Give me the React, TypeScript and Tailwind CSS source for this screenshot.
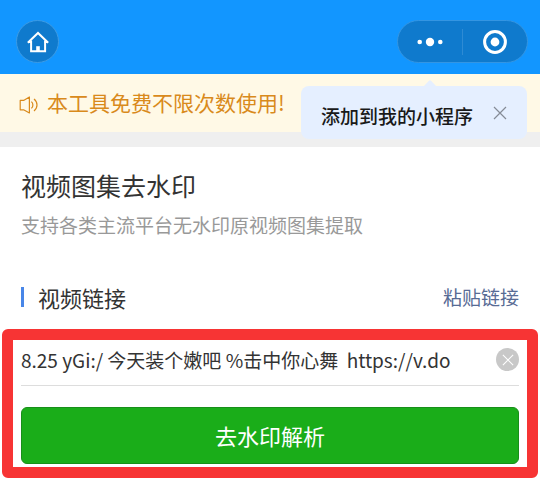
import { useState } from "react";

function HomeIcon() {
  return (
    <svg viewBox="0 0 24 24" className="w-6 h-6" fill="none" stroke="currentColor" strokeWidth="2">
      <path d="M1.8 12.8 12 3l10.2 9.8" />
      <path d="M5.1 10.5v10.8h14V10.5" />
      <path d="M10.2 21v-4.8h3.6V21z" fill="currentColor" stroke="none" />
      <path d="M2 11.9h3.6M18.6 11.9H22" />
    </svg>
  );
}

function SpeakerIcon() {
  return (
    <svg viewBox="0 0 20 20" className="w-5 h-5 shrink-0" fill="none" stroke="currentColor" strokeWidth="1.2">
      <path d="M1.2 5.4h3.4L10.4 2v16l-5.8-3.2H1.2z" strokeLinejoin="round" />
      <path d="M12.4 6.6c2 1.8 2 5 0 6.8" />
      <path d="M15 4c4 3.2 4 8.8 0 12" />
    </svg>
  );
}

function CloseIcon({ className }: { className: string }) {
  return (
    <svg viewBox="0 0 14 14" className={className} fill="none" stroke="currentColor" strokeWidth="1.2">
      <path d="M1 1l12 12M13 1L1 13" />
    </svg>
  );
}

function Header() {
  return (
    <header className="flex h-[74px] items-start justify-between bg-[#1296ff] pt-5 pl-4 pr-3 text-white">
      <button
        aria-label="首页"
        className="flex h-[43px] w-[43px] items-center justify-center rounded-full border border-[#3d9be4] bg-[#0f7acd]"
      >
        <HomeIcon />
      </button>
      <div className="relative flex h-[43px] w-[131px] items-center rounded-full border border-[#3495e2] bg-[#0f7acd]">
        <button aria-label="更多" className="flex h-full flex-1 items-center justify-center">
          <svg viewBox="0 0 26 10" className="h-[10px] w-[26px]" fill="currentColor">
            <circle cx="2.7" cy="5" r="2.3" />
            <circle cx="13" cy="5" r="4.2" />
            <circle cx="23.3" cy="5" r="2.3" />
          </svg>
        </button>
        <span className="h-[26px] w-px bg-[#2e8bd4]" />
        <button aria-label="关闭" className="flex h-full flex-1 items-center justify-center">
          <svg viewBox="0 0 24 24" className="h-6 w-6" fill="none" stroke="currentColor" strokeWidth="3">
            <circle cx="12" cy="12" r="10.4" />
            <circle cx="12" cy="12" r="4.4" fill="currentColor" stroke="none" />
          </svg>
        </button>
        <AddTip />
      </div>
    </header>
  );
}

function AddTip() {
  const [open, setOpen] = useState(true);
  if (!open) return null;

  return (
    <div className="absolute right-0 top-[65px] flex h-[53px] w-[226px] items-center justify-between rounded-lg bg-[#e5efff] px-5">
      <svg viewBox="0 0 14 7" className="absolute -top-[6px] left-[122px] h-[7px] w-[14px]" fill="#e5efff">
        <path d="M0 7 6 .8Q7-.2 8 .8L14 7z" />
      </svg>
      <span className="pt-[6px] text-[19px] leading-7 font-medium whitespace-nowrap text-[#191919]">
        添加到我的小程序
      </span>
      <button aria-label="关闭提示" className="text-[#858b96]" onClick={() => setOpen(false)}>
        <CloseIcon className="h-[14px] w-[14px]" />
      </button>
    </div>
  );
}

export default function App() {
  const [link, setLink] = useState("8.25 yGi:/ 今天装个嫩吧 %击中你心舞  https://v.do");

  return (
    <div className="min-h-screen bg-white font-['Noto_Sans_CJK_SC',sans-serif] text-[#333]">
      <Header />
      <div className="flex h-[58px] items-center gap-2 bg-[#fff9e6] pb-[2px] pl-[19px] text-[#d98a1c]">
        <span className="pt-[6px]">
          <SpeakerIcon />
        </span>
        <p className="text-[21px] leading-7">本工具免费不限次数使用!</p>
      </div>
      <div className="h-[15px] bg-[#efefef]" />

      <main>
        <div className="px-[21px] pt-5">
          <h1 className="text-[25px] leading-9">视频图集去水印</h1>
          <p className="mt-1 text-[19px] leading-9 text-[#999]">支持各类主流平台无水印原视频图集提取</p>
        </div>

        <div className="mt-9 flex items-center justify-between px-[21px]">
          <label htmlFor="link" className="flex items-center gap-[14px] text-[22px] leading-9">
            <span className="h-5 w-[3px] bg-[#4886e8]" />
            视频链接
          </label>
          <button className="text-[19px] leading-9 text-[#576b95]">粘贴链接</button>
        </div>

        <section className="mx-[2px] mt-[14px] rounded-md border-[11px] border-[#f73434] px-2 pb-[3px]">
          <div className="flex h-[46px] items-center gap-4 border-b border-[#ddd] pb-[6px]">
            <input
              id="link"
              type="text"
              value={link}
              onChange={(e) => setLink(e.target.value)}
              className="min-w-0 flex-1 bg-transparent text-[19px] leading-8 outline-none"
            />
            <button
              aria-label="清空"
              onClick={() => setLink("")}
              className="flex h-[23px] w-[23px] items-center justify-center rounded-full bg-[#c8c8c8] text-white"
            >
              <CloseIcon className="h-3 w-3" />
            </button>
          </div>
          <button className="mt-[21px] h-[57px] w-full rounded-md border border-[#188f19] bg-[#1aad19] text-[22px] text-white">
            去水印解析
          </button>
        </section>
      </main>
    </div>
  );
}
